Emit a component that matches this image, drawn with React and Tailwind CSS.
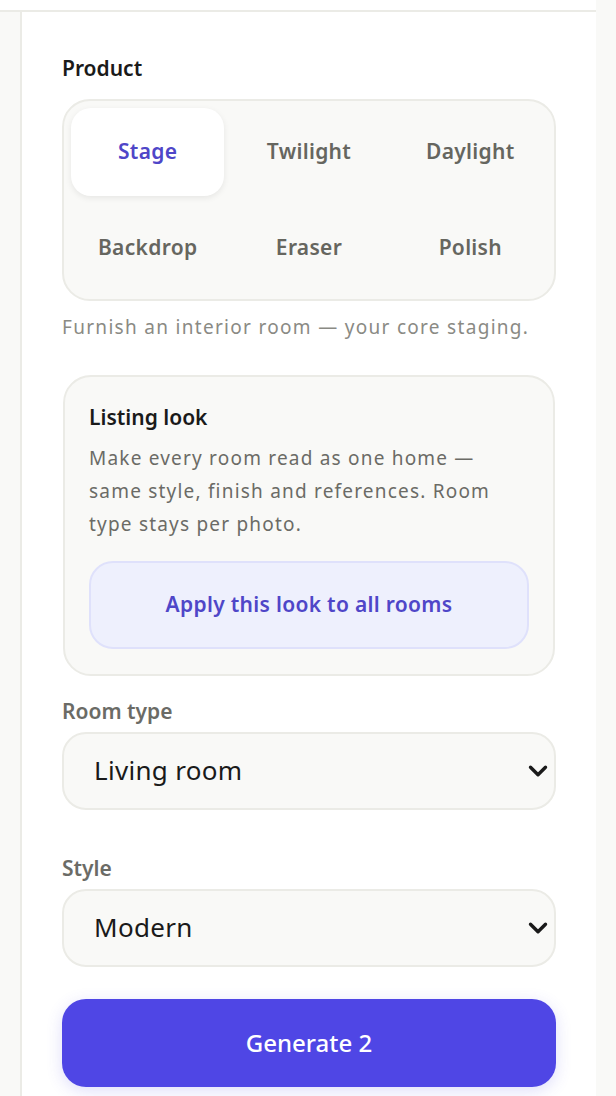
import { ChevronDown } from "lucide-react";

const products = ["Stage", "Twilight", "Daylight", "Backdrop", "Eraser", "Polish"];

function Select({ label, value, options }) {
  return (
    <div>
      <div className="text-[21px] font-semibold text-[#6b6b66] leading-none mb-[10px]">{label}</div>
      <div className="relative">
        <select
          defaultValue={value}
          className="block w-full h-[78px] appearance-none rounded-[24px] border-2 border-[#ebebe6] bg-[#f9f9f7] pl-[30px] pr-[50px] text-[26px] text-[#1a1a1a] tracking-[0.3px] outline-none"
        >
          {options.map((o) => (
            <option key={o}>{o}</option>
          ))}
        </select>
        <ChevronDown
          className="pointer-events-none absolute right-[3px] top-1/2 -translate-y-1/2 text-[#1a1a1a]"
          size={30}
          strokeWidth={2.7}
        />
      </div>
    </div>
  );
}

export default function App() {
  const active = "Stage";

  return (
    <div className="min-h-[1096px] bg-[#f9f9f7] font-['Noto_Sans',sans-serif]">
      <div className="w-[596px]">
        <div className="h-[12px] bg-white border-b-2 border-[#ebebe6]" />
        <div className="flex min-h-[1084px]">
          <div className="w-[22px] shrink-0 border-r-2 border-[#ebebe6] bg-[#f9f9f7]" />
          <main className="flex-1 bg-white px-[40px] pt-[46px] pb-[8px]">
            <div className="text-[21px] font-semibold text-[#1a1a1a] leading-none mb-[20px]">Product</div>
            <div className="grid grid-cols-3 gap-[8px] rounded-[28px] border-2 border-[#ebebe6] bg-[#f9f9f7] p-[7px]">
              {products.map((p) => (
                <button
                  key={p}
                  className={
                    p === active
                      ? "h-[88px] rounded-[20px] bg-white text-[21px] font-semibold text-[#4f46c8] tracking-[0.3px] shadow-[0_2px_6px_rgba(0,0,0,0.08)]"
                      : "h-[88px] rounded-[20px] text-[21px] font-semibold text-[#66665f] tracking-[0.3px]"
                  }
                >
                  {p}
                </button>
              ))}
            </div>
            <p className="mt-[12px] text-[19px] text-[#8a8a84] tracking-[1.3px]">
              Furnish an interior room — your core staging.
            </p>

            <div className="mt-[33px] mx-[1px] rounded-[28px] border-2 border-[#ebebe6] bg-[#f9f9f7] px-[24px] pt-[30px] pb-[25px]">
              <div className="text-[21px] font-semibold text-[#1a1a1a] leading-none">Listing look</div>
              <p className="mt-[14px] max-w-[405px] text-[19px] leading-[33px] text-[#6b6b66] tracking-[1.2px]">
                Make every room read as one home — same style, finish and references. Room type stays per photo.
              </p>
              <button className="mt-[20px] w-full h-[88px] rounded-[24px] border-2 border-[#dfe1fb] bg-[#eef0fd] text-[21px] font-semibold text-[#4f46c8] tracking-[0.3px]">
                Apply this look to all rooms
              </button>
            </div>

            <div className="mt-[25px] flex flex-col gap-[48px]">
              <Select label="Room type" value="Living room" options={["Living room", "Bedroom", "Kitchen", "Dining room"]} />
              <Select label="Style" value="Modern" options={["Modern", "Scandinavian", "Industrial", "Coastal"]} />
            </div>

            <button className="mt-[32px] w-full h-[88px] rounded-[24px] bg-[#4f46e5] text-[24px] font-medium text-white shadow-[0_4px_16px_rgba(79,70,229,0.18)]">
              Generate 2
            </button>
          </main>
        </div>
      </div>
    </div>
  );
}
